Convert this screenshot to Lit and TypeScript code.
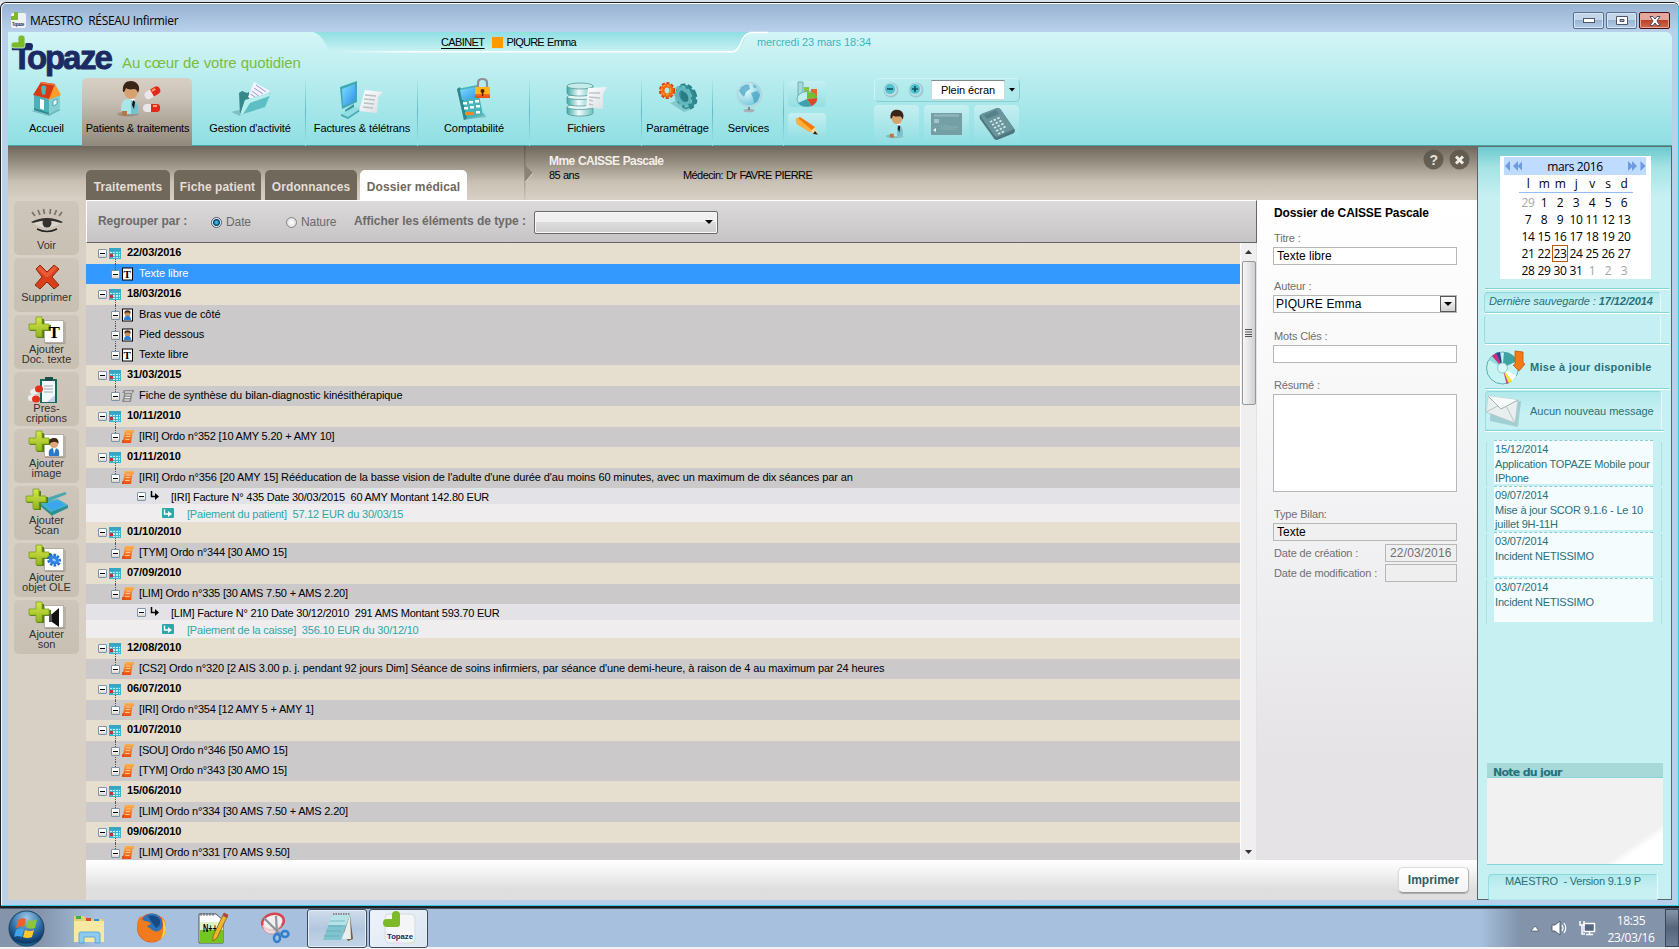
import { LitElement, html, svg, css, TemplateResult } from "lit";
import { customElement, property } from "lit/decorators.js";
import { classMap } from "lit/directives/class-map.js";

type Kind = "date" | "doc" | "bill" | "pay";
interface Row { kind: Kind; icon?: string; text: string; selected?: boolean; }

const d = (text: string): Row => ({ kind: "date", text });
const o = (icon: string, text: string, selected = false): Row => ({ kind: "doc", icon, text, selected });

const ROWS: Row[] = [
  d("22/03/2016"), o("text", "Texte libre", true),
  d("18/03/2016"), o("photo", "Bras vue de côté"), o("photo", "Pied dessous"), o("text", "Texte libre"),
  d("31/03/2015"), o("sheet", "Fiche de synthèse du bilan-diagnostic kinésithérapique"),
  d("10/11/2010"), o("ordo", "[IRI] Ordo n°352 [10 AMY 5.20 + AMY 10]"),
  d("01/11/2010"), o("ordo", "[IRI] Ordo n°356 [20 AMY 15] Rééducation de la basse vision de l'adulte d'une durée d'au moins 60 minutes, avec un maximum de dix séances par an"),
  { kind: "bill", text: "[IRI] Facture N° 435 Date 30/03/2015  60 AMY Montant 142.80 EUR" },
  { kind: "pay", text: "[Paiement du patient]  57.12 EUR du 30/03/15" },
  d("01/10/2010"), o("ordo", "[TYM] Ordo n°344 [30 AMO 15]"),
  d("07/09/2010"), o("ordo", "[LIM] Ordo n°335 [30 AMS 7.50 + AMS 2.20]"),
  { kind: "bill", text: "[LIM] Facture N° 210 Date 30/12/2010  291 AMS Montant 593.70 EUR" },
  { kind: "pay", text: "[Paiement de la caisse]  356.10 EUR du 30/12/10" },
  d("12/08/2010"), o("ordo", "[CS2] Ordo n°320 [2 AIS 3.00 p. j. pendant 92 jours Dim] Séance de soins infirmiers, par séance d'une demi-heure, à raison de 4 au maximum par 24 heures"),
  d("06/07/2010"), o("ordo", "[IRI] Ordo n°354 [12 AMY 5 + AMY 1]"),
  d("01/07/2010"), o("ordo", "[SOU] Ordo n°346 [50 AMO 15]"), o("ordo", "[TYM] Ordo n°343 [30 AMO 15]"),
  d("15/06/2010"), o("ordo", "[LIM] Ordo n°334 [30 AMS 7.50 + AMS 2.20]"),
  d("09/06/2010"), o("ordo", "[LIM] Ordo n°331 [70 AMS 9.50]"),
];

const defs = svg`<defs>
  <linearGradient id="tealx" x1="0" y1="0" x2="1" y2="0"><stop offset="0" stop-color="#3fa9a8"/><stop offset=".45" stop-color="#f2fbfb"/><stop offset="1" stop-color="#6cc0bf"/></linearGradient>
  <linearGradient id="scr" x1="0" y1="0" x2="1" y2="1"><stop offset="0" stop-color="#7fe0ff"/><stop offset="1" stop-color="#2f8ee8"/></linearGradient>
  <linearGradient id="ora" x1="0" y1="0" x2="0" y2="1"><stop offset="0" stop-color="#ffb24a"/><stop offset="1" stop-color="#ee4b0d"/></linearGradient>
  <linearGradient id="pap" x1="0" y1="0" x2="1" y2="1"><stop offset="0" stop-color="#ffffff"/><stop offset="1" stop-color="#d8dde2"/></linearGradient>
  <radialGradient id="orb" cx=".5" cy=".2" r=".9"><stop offset="0" stop-color="#9ccbe8"/><stop offset=".5" stop-color="#2f6ea8"/><stop offset=".8" stop-color="#0e3a66"/><stop offset="1" stop-color="#35c3e8"/></radialGradient>
  <radialGradient id="glo" cx=".35" cy=".3" r=".8"><stop offset="0" stop-color="#f0ffff"/><stop offset="1" stop-color="#6fc4da"/></radialGradient>
  <linearGradient id="grn" x1="0" y1="0" x2="0" y2="1"><stop offset="0" stop-color="#d6e84a"/><stop offset="1" stop-color="#93b51e"/></linearGradient>
</defs>`;

const pic = (w: number, h: number, body: TemplateResult, cls = "") =>
  html`<svg class=${cls} width=${w} height=${h} viewBox="0 0 ${w} ${h}">${defs}${body}</svg>`;

const person = svg`
  <ellipse cx="12" cy="34" rx="11" ry="2.500" fill="#333" opacity=".22"/>
  <path d="M7 34c-3-1-3-13 3-15l7 0c6 2 6 14 4 15z" fill="#a9e6ea"/><path d="M15 20l4 1c4 3 4 11 2 13h-6z" fill="#74c2cb"/>
  <path d="M6 31h5v4c-2 2-5 1-5-1z" fill="#b9763f"/>
  <path d="M14 18l5 1-2 3z" fill="#fff"/><path d="M17 20l2 2-1 7-2-4z" fill="#111"/>
  <ellipse cx="15" cy="11" rx="7" ry="8" fill="#d8a170"/><path d="M7 12C6 4 10 1 15 1s9 4 8 9l-1 3c-1-3-2-4-4-4-4 1-7 0-8-1-1 2-1 4-3 4z" fill="#3a2415"/>`;

const NAV: { label: string; icon: TemplateResult; active?: boolean }[] = [
  { label: "Accueil", icon: svg`<path d="M4 30l18 5 12-6-6-3z" fill="#1d6a70" opacity=".35"/><path d="M7 14l15 4v15L7 28z" fill="#4cb0b6"/><path d="M22 18l11-6v15l-11 6z" fill="#83d0d3"/><path d="M7 27l15 5v1.500L7 29z" fill="#2b868d"/>
    <path d="M28 3l6 11-13 5z" fill="#ff9a2b"/><path d="M14 1l14 2-6 15-16-4z" fill="#d23c10"/><path d="M14 1l14 2-.7 1.500L13 2.500z" fill="#ef7040"/><path d="M14 7q0-3 3-2.500 3 .5 2 3.500l-1 6-3-1z" fill="#4fb6bb"/><path d="M13 18l4 1v10l-4-1.500z" fill="#fff"/><path d="M26 20l4-2v5l-4 2z" fill="#e8fbfb" stroke="#3c8c92" stroke-width=".7"/>` },
  { label: "Patients & traitements", active: true, icon: svg`<g transform="translate(-2 -1)">${person}</g>
    <g transform="rotate(-30 34 12)"><rect x="26" y="8" width="17" height="8" rx="4" fill="#ece6e8"/><path d="M34 8h5a4 4 0 010 8h-5z" fill="#e3281a"/><path d="M35 10h4" stroke="#ff9d6d" stroke-width="2"/></g>
    <rect x="25" y="23" width="17" height="8" rx="4" fill="#ece6e8"/><path d="M33 23h6q3 0 3 3v2q0 3-3 3h-6z" fill="#e3281a"/><path d="M35 25h4" stroke="#ff9d6d" stroke-width="2"/>` },
  { label: "Gestion d'activité", icon: svg`<g transform="translate(1 -1)"><path d="M0 32l12-3-3 7z" fill="#2b6f74" opacity=".3"/><path d="M8 13l3-2 5 2 2-1v18l-9 5z" fill="#36888d"/><path d="M23 2l16 9-14 10-8-4z" fill="#f4f4ff"/><path d="M25 5l10 7M23 8l9 6M21 11l8 6M19.500 14l6 4" stroke="#9b97d8" stroke-width="1"/>
    <path d="M14 20l26-7-6 14-25 8z" fill="#5dbfc3"/><path d="M14 20l26-7-1.500 3L19 23 12 34l-3 1z" fill="#b9eeee"/></g>` },
  { label: "Factures & télétrans", icon: svg`<path d="M-2 6l17-6v21L0 28z" fill="#3fa9b3"/><path d="M0 8l13-5v17L1 25z" fill="url(#scr)"/><path d="M3 29l9-6v5l-8 6z" fill="#3c979d"/><path d="M-1 33l13-7 7 2-13 8z" fill="#8fdde0"/><path d="M-1 33l7 3 12-8v2L6 38l-7-3z" fill="#46aab0"/>
    <path d="M23 9l18 2-5 5-1 16-18-2z" fill="url(#pap)"/><path d="M23 14l11 1M22 18l11 1M22 22l10 1M21 26l10 1" stroke="#b9c1c4" stroke-width="1.3"/>` },
  { label: "Comptabilité", icon: svg`<path d="M8 39l24-3-2-4z" fill="#2b6f74" opacity=".35"/><path d="M3 8l20-4 6 30-19 5z" fill="#4ab4ba"/><path d="M3 8l3-2 7 31-3 2z" fill="#2d888e"/><path d="M6 9l17-3 2 10-17 3z" fill="url(#scr)"/>
    <g fill="#f2fdfd"><rect x="9" y="21" width="4" height="2.500"/><rect x="15" y="20" width="4" height="2.500"/><rect x="21" y="19" width="4" height="2.500"/><rect x="10" y="26" width="4" height="2.500"/><rect x="16" y="25" width="4" height="2.500"/><rect x="22" y="24" width="4" height="2.500"/><rect x="22" y="30" width="4" height="2.500"/></g><rect x="11" y="31" width="9" height="3" fill="#f08a1f"/>
    <path d="M24 7V2q0-4 4.500-4T33 2v5" fill="none" stroke="#8d9196" stroke-width="2.200"/><path d="M21 6h15v11H21z" fill="url(#ora)"/><path d="M21 6h15v7H21z" fill="#ffb516"/><circle cx="28.500" cy="10" r="2" fill="#5a1c08"/><path d="M27.800 10h1.500v5h-1.500z" fill="#5a1c08"/>` },
  { label: "Fichiers", icon: svg`<g stroke="#4c8f8f" stroke-width=".7"><path d="M1 26v6c0 4 26 4 26 0v-6z" fill="url(#tealx)"/><ellipse cx="14" cy="26" rx="13" ry="2.500" fill="#e2f7f6"/><path d="M1 16v6c0 4 26 4 26 0v-6z" fill="url(#tealx)"/><ellipse cx="14" cy="16" rx="13" ry="2.500" fill="#e2f7f6"/><path d="M1 5v7c0 4 26 4 26 0V5z" fill="url(#tealx)"/><ellipse cx="14" cy="5" rx="13" ry="3" fill="#c4ecea"/></g>
    <path d="M22 7l19-1-4 7v15l-17-2z" fill="url(#pap)"/><path d="M23 12h11M23 16l11 1M23 19l4 1M23 23l4 1" stroke="#bcc3c7" stroke-width="1.400"/>` },
  { label: "Paramétrage", icon: svg`<path d="M12 22l14 9 6-2-12-10z" fill="#1d6a70" opacity=".25"/>
    <g transform="rotate(-25 27 15)"><ellipse cx="28" cy="16" rx="9" ry="12" fill="none" stroke="#2c7f86" stroke-width="3" stroke-dasharray="4.500 2.500"/><ellipse cx="27.500" cy="16" rx="6.300" ry="9" fill="none" stroke="#2f8a91" stroke-width="6.500"/><ellipse cx="25" cy="14.500" rx="7.500" ry="10.500" fill="none" stroke="#6fc1c6" stroke-width="2.500" stroke-dasharray="4 2.500"/><ellipse cx="25.500" cy="14.500" rx="5.500" ry="8" fill="none" stroke="#62b7bc" stroke-width="3.500"/><ellipse cx="26.500" cy="15.500" rx="3.200" ry="5.500" fill="#2a7c84"/></g>
    <ellipse cx="9" cy="9.500" rx="6.800" ry="7.200" fill="none" stroke="#dd3d0a" stroke-width="2.500" stroke-dasharray="3 1.600"/><ellipse cx="9" cy="9.500" rx="4.500" ry="5" fill="none" stroke="#f2640f" stroke-width="4.200"/><ellipse cx="8.200" cy="9" rx="4.500" ry="5" fill="none" stroke="#ffa32a" stroke-width="1.200" stroke-dasharray="3 1.500"/>` },
  { label: "Services", icon: svg`<ellipse cx="20" cy="29.500" rx="5.500" ry="1.800" fill="#a8b0b3"/><path d="M19 25h2v4h-2z" fill="#7c8689"/><circle cx="20.500" cy="13.500" r="12" fill="none" stroke="#b3d4db" stroke-width="1.500"/><circle cx="20" cy="13" r="11.200" fill="url(#glo)"/><path d="M12 6q5-4 8-2l1 4-4 3-2 5-3-3-2-3zM22 12l6-2 3 4-3 7-3 1-1-5zM24 3l4 3-3 1z" fill="#3e9ec2" opacity=".7"/>` },
];

const plus = svg`<path d="M9 2h7v6h7v6h-7v7H9v-7H2V8h7z" fill="#4f7d1b" transform="translate(1 1)"/><path d="M9 1h6v7h7v6h-7v7H9v-7H2V8h7z" fill="url(#grn)" stroke="#7aa01d" stroke-width=".8"/>`;
const sheetBg = svg`<rect x="17.500" y="4.500" width="19" height="22" fill="#fff" stroke="#b6aea4"/><path d="M18 27.500h20V6" fill="none" stroke="#a39b91"/>`;
const man = svg`<path d="M22 26c-1-6 1-8 5-8s6 2 5 8z" fill="#2b79c9"/><path d="M26 18l1 6 2-6z" fill="#fff"/><circle cx="27" cy="14" r="4" fill="#dda878"/><path d="M22.500 14c-1-5 2-6 4.500-6s5 1 4.500 6c-2-3-6-3-9 0z" fill="#3d2614"/>`;
const TOOLS = [
  { cls: "eye", lines: ["Voir"], icon: svg`<path d="M6 13q14-8 28 0-14 9-28 0z" fill="#dcd6ce"/><path d="M4 12q16-8 32 0l-2 1q-14-5-28 0z" fill="#33302e"/><circle cx="20" cy="13" r="4.500" fill="#33302e"/><path d="M10 19q10 5 20 0" fill="none" stroke="#222" stroke-width="1.500"/><path d="M8 6L5 2M13 5l-2-5M17.500 4l-1-5M23 4l.5-5M27.500 5l2-5M32 6l3-4" stroke="#77726c" stroke-width="1.700"/>` },
  { cls: "del", lines: ["Supprimer"], icon: svg`<path d="M9 6l4-4 7 7 7-7 5 4-7 8 7 8-5 4-7-7-7 7-5-4 7-8z" fill="#d8401c" stroke="#8e2a12" stroke-width="1"/><path d="M10 6l3-3 7 7 7-7 3 2-9 9-2 0z" fill="#ea5a34"/>` },
  { cls: "", lines: ["Ajouter", "Doc. texte"], icon: svg`${sheetBg}${plus}<text x="21.500" y="22" font-family="Liberation Serif" font-weight="700" font-size="17">T</text>` },
  { cls: "pre", lines: ["Pres-", "criptions"], icon: svg`<path d="M13 4h17v24H13z" fill="#17695c"/><rect x="15" y="6" width="13" height="21" fill="#f3f8fb"/><path d="M18 2h8v4h-8z" fill="#1d4f4a"/><path d="M17 11h9M17 14h9M17 17h9" stroke="#96a8b5"/><path d="M20 27l8-7v7z" fill="#c8cfe8"/><rect x="3" y="13" width="12" height="6" rx="3" fill="#eee" transform="rotate(-20 9 16)"/><ellipse cx="12" cy="14" rx="4" ry="3.500" fill="#e6301b"/><rect x="1" y="20" width="12" height="6" rx="3" fill="#eee"/><ellipse cx="9" cy="24" rx="4" ry="3.500" fill="#e6301b"/>` },
  { cls: "", lines: ["Ajouter", "image"], icon: svg`${sheetBg}${plus}${man}` },
  { cls: "", lines: ["Ajouter", "Scan"], icon: svg`<path d="M14 13l24-8 2 2-22 9z" fill="#4ba6ae"/><path d="M13 16l18-4 10 6-17 8z" fill="#43b2cf"/><path d="M19 17l12-3 6 4-12 5z" fill="#3ba5f2"/><path d="M13 16l11 9v3L13 19zM24 25l17-7v3l-17 8z" fill="#2e8f99"/><g transform="translate(-3 1)">${plus}</g>` },
  { cls: "", lines: ["Ajouter", "objet OLE"], icon: svg`${sheetBg}${plus}<g transform="rotate(30 27 16)"><ellipse cx="27" cy="16" rx="6" ry="5" fill="none" stroke="#1f6fd0" stroke-width="2.500" stroke-dasharray="2.500 1.200"/><ellipse cx="27" cy="16" rx="3.500" ry="2.800" fill="#9fd2fb" stroke="#2d86e6" stroke-width="3.200"/></g>` },
  { cls: "", lines: ["Ajouter", "son"], icon: svg`${sheetBg}${plus}<path d="M22 13h3v8h-3z" fill="#555"/><path d="M25 13l7-6v19l-7-5z" fill="#111"/>` },
];

const rowIcon = (k: string) => ({
  text: svg`<rect x=".5" y="1" width="10" height="12" fill="#fff" stroke="#000"/><text x="1.600" y="11" font-family="Liberation Serif" font-weight="700" font-size="11" fill="#000">T</text>`,
  photo: svg`<rect x=".5" y="1" width="10" height="12" fill="#fff" stroke="#000"/><path d="M2 12c0-4 2-4 3.500-4S9 8 9 12z" fill="#2f7fd6"/><rect x="3" y="3" width="5" height="5" fill="#c98f5c"/><path d="M2.500 6V3.500Q5.500 1 8.500 3.500V6L7 4.500H4z" fill="#4a2c14"/>`,
  sheet: svg`<path d="M2 1h10.500l-1 2.500H10.500L9 13H0l.6-3H1L2 4H0z" fill="#8f8f8f"/><path d="M3 3h7M3.500 6h5M3 8.500h5M2.500 11h5" stroke="#f5f5f5" stroke-width="1.200"/>`,
  ordo: svg`<path d="M3 0h9.500l-1 3h-1L9 13H0l.5-3H1.200z" fill="url(#ora)"/><path d="M4.200 4h4.500M3.700 6.500h4.500M3.200 9.500h4.500" stroke="#ffc58a" stroke-width="1"/><path d="M0 13l.5-3H2.200l-.5 3z" fill="#d94d14"/>`,
}[k]!);

@customElement("history-row")
export class HistoryRow extends LitElement {
  @property({ attribute: false }) row!: Row;
  @property({ type: Boolean }) last = false;
  static styles = css`
    :host { display: block; flex: none; }
    .r { display: flex; box-sizing: border-box; position: relative; white-space: pre; font: 11px "Liberation Sans", Arial, sans-serif; color: #000; }
    .date { height: 21px; background: #e6dfcf; padding-left: 12px; font-weight: 700; letter-spacing: -0.07px; line-height: 19px; }
    .doc { height: 20px; background: #cbc9ca; padding-left: 25px; line-height: 19px; letter-spacing: -0.07px; }
    .ordo { letter-spacing: -0.18px; }
    .long { letter-spacing: -0.115px; }
    .sel { background: #3399ff; color: #fff; }
    .bill { height: 16px; background: #e3e2e6; padding-left: 51px; line-height: 18px; letter-spacing: -0.22px; }
    .pay { height: 18px; background: #efedee; padding-left: 76px; line-height: 20px; color: #2ba8a8; letter-spacing: -0.2px; }
    .box { box-sizing: border-box; width: 9px; height: 9px; border: 1px solid #7d94ab; border-radius: 1px; background: linear-gradient(#fff 40%, #d8d3cb); margin-top: 6px; display: grid; place-items: center; flex: none; z-index: 1; }
    .box i { width: 5px; height: 1px; background: #000; }
    .bill .box { margin-top: 4px; }
    svg { flex: none; }
    .cal { margin: 5px 6px 0 2px; } .ic { margin: 3px 5px 0 2px; }
    .arr { margin: 3px 12px 0 4px; } .pi { margin: 4px 13px 0 0; }
    .date::after, .link::after { content: ""; position: absolute; left: 29px; top: 16px; height: 5px; border-left: 1px dotted #555; }
    .doc::before { content: ""; position: absolute; left: 29px; top: 0; height: 6px; border-left: 1px dotted #555; }
  `;
  render() {
    const r = this.row;
    const box = html`<span class="box"><i></i></span>`;
    if (r.kind === "date") return html`<div class="r date">${box}${pic(12, 11, svg`<rect width="12" height="11" fill="#3db4cf"/><path d="M0 0h12v3H0z" fill="#36a6c4"/><path d="M1 4h2v1H1zM4 4h2v1H4zM7 4h2v1H7zM10 4h1v1h-1zM4 6h2v2H4zM7 6h2v2H7zM10 6h1v2h-1zM4 9h2v1H4zM7 9h2v1H7zM10 9h1v1h-1z" fill="#c4ecf3"/><path d="M1 6h3v3H1z" fill="#c5312d"/>`, "cal")}<span>${r.text}</span></div>`;
    if (r.kind === "doc") return html`<div class=${classMap({ r: true, doc: true, ordo: r.icon === "ordo", long: r.text.length > 100, sel: !!r.selected, link: !this.last })}>${box}${pic(12, 14, rowIcon(r.icon!), "ic")}<span>${r.text}</span></div>`;
    if (r.kind === "bill") return html`<div class="r bill">${box}${pic(9, 10, svg`<path d="M1.500 0v5.500H5" fill="none" stroke="#000" stroke-width="1.500"/><path d="M5 2l4 3.500L5 9z" fill="#000"/>`, "arr")}<span>${r.text}</span></div>`;
    return html`<div class="r pay">${pic(12, 10, svg`<rect width="12" height="10" rx="1" fill="#2ba8a8"/><path d="M2.500 1.500v4.500H7" fill="none" stroke="#fff" stroke-width="1.400"/><path d="M6 3l4 3-4 3z" fill="#fff"/>`, "pi")}<span>${r.text}</span></div>`;
  }
}

@customElement("month-calendar")
export class MonthCalendar extends LitElement {
  static styles = css`
    :host { display: flex; flex-direction: column; width: 151px; height: 123px; background: #fff; font: 12px "Open Sans", "Noto Sans", sans-serif; color: #000; box-sizing: border-box; padding: 1px 5px 0 4px; letter-spacing: -0.4px; flex: none; }
    .head { display: flex; align-items: center; justify-content: space-between; height: 19px; background: #bfdbff; }
    .days, .grid { display: grid; grid-template-columns: repeat(7, 16px); margin-left: 16px; text-align: center; }
    .days { height: 18px; line-height: 18px; border-bottom: 1px solid #94bdf2; width: 114px; margin-left: 15px; padding-left: 1px; box-sizing: border-box; }
    .grid { grid-auto-rows: 17px; line-height: 17px; margin-top: 1px; }
    .off { color: #a6a6a6; }
    .now { outline: 1px solid #c0560f; outline-offset: -1px; }
  `;
  render() {
    const days = [29, ...Array.from({ length: 31 }, (_, i) => i + 1), 1, 2, 3];
    return html`<div class="head">${pic(18, 10, svg`<path d="M6 0v10L1 5zM14 0v10L9 5zM18.500 0v10l-5-5z" fill="#6d9bdd"/>`)}<span>mars 2016</span>${pic(18, 10, svg`<path d="M0 0v10l5-5zM4 0v10l5-5zM12.500 0v10l5-5z" fill="#6d9bdd"/>`)}</div>
      <div class="days">${["l", "m", "m", "j", "v", "s", "d"].map((x) => html`<span>${x}</span>`)}</div>
      <div class="grid">${days.map((n, i) => html`<span class=${classMap({ off: i < 1 || i > 31, now: i === 23 })}>${n}</span>`)}</div>`;
  }
}

@customElement("app-root")
export class AppRoot extends LitElement {
  static styles = css`
    :host { display: flex; flex-direction: column; width: 1679px; height: 949px; overflow: hidden; font: 11px "Liberation Sans", Arial, sans-serif; color: #000; background: #f3f3f3; }
    * { box-sizing: border-box; }
    svg { display: block; overflow: visible; flex: none; }
    .edge { height: 2px; background: #d7e1ec; flex: none; }
    .window { height: 906px; flex: none; display: flex; flex-direction: column; background: #b9d0ea; border: solid #1c1f22; border-width: 1px 0 2px 1px; border-radius: 6px 6px 0 0; box-shadow: inset -1px -1px 0 #32cbe8, inset 1px 1px 0 #f4f8fc; }
    .title { height: 29px; margin: 0 1px 0 1px; background: linear-gradient(#fff 0 1px, #98b3d2 1px, #b9d1eb); display: flex; align-items: center; padding: 4px 7px 0 8px; font: 12px "Open Sans", sans-serif; letter-spacing: -0.33px; white-space: pre; border-radius: 6px 6px 0 0; gap: 4px; }
    .title .cap { flex: 1; padding-top: 2px; }
    .wb { width: 31px; height: 17px; margin: 2px 0 0 -2px; border: 1px solid #56708f; border-radius: 2px; background: linear-gradient(#c3d5e9 0 48%, #9ab5d3 50%, #b4cce6); box-shadow: inset 0 0 0 1px #d8e5f2; display: grid; place-items: center; }
    .wbs { display: flex; gap: 4px; margin-right: 1px; }
    .wb.x { border-color: #4a1218; background: linear-gradient(#e3a79c 0 45%, #bc4128 50%, #cd6c50); box-shadow: inset 0 0 0 1px #e6a79b; }
    .client { width: 1664px; height: 868px; margin-left: 7px; display: flex; flex-direction: column; }

    .header { height: 114px; flex: none; border-bottom: 1px solid #47a3a5; background: linear-gradient(#d3f5f7, #bdeef0 35%, #8fdfe3); display: flex; flex-direction: column; border-radius: 0 6px 0 0; }
    .top { height: 46px; display: flex; align-items: flex-start; }
    .brand { width: 300px; display: flex; height: 46px; flex: none; }
    .brand .slogan { font-size: 15px; color: #7dbb3c; padding: 22px 0 0 5px; white-space: nowrap; letter-spacing: -0.08px; }
    .strip { display: grid; width: 450px; height: 46px; align-content: start; flex: none; }
    .strip > * { grid-area: 1 / 1; }
    .session { display: flex; align-items: center; height: 20px; padding-left: 133px; gap: 8px; letter-spacing: -0.6px; z-index: 1; }
    .session u { text-underline-offset: 2px; }
    .session b { width: 11px; height: 11px; background: #ff9900; }
    .session span { margin-left: -5px; letter-spacing: -0.8px; word-spacing: 1px; }
    .clock { color: #3cb6bd; height: 21px; line-height: 21px; margin-left: -1px; letter-spacing: -0.1px; }
    .nav { display: grid; grid-template-columns: 74px 112px 112px 112px 112px 112px 71px 71px 95px 150px; height: 67px; }
    .item { display: flex; flex-direction: column; align-items: center; padding: 3px 0 0 1px; position: relative; white-space: nowrap; letter-spacing: -0.1px; border-right: 1px solid; border-image: linear-gradient(#b9eaec, #62bdc2 50%, #9fe2e5) 1; }
    .item:first-child { border-color: transparent; border-image: none; padding-left: 4px; }
    .item span { line-height: 17px; }
    .item.on { background: linear-gradient(#d9d0c5, #cbc2b7 30%, #91897b); border: 0; border-radius: 5px 5px 0 0; width: 110px; height: 68px; letter-spacing: -0.18px; }
    .mini { display: flex; flex-direction: column; gap: 6px; padding: 3px 0 0 4px; }
    .mini div, .sq { background: linear-gradient(#c6eff1, #93dfe3); border-radius: 4px; display: grid; place-items: center; }
    .mini div { width: 38px; height: 26px; }
    .ctl { display: flex; flex-direction: column; margin-left: -5px; }
    .zoomer { display: flex; align-items: center; width: 146px; height: 24px; border: 1px solid; border-color: #d3f2f3 #8accd0 #8accd0 #d3f2f3; border-radius: 5px; padding-left: 8px; }
    .zoomer .rd { margin-right: 9px; }
    .field { width: 74px; height: 20px; margin-left: -2px; background: #fff; border: 1px solid #c9dadb; border-top-color: #7d8d8e; display: grid; place-items: center; letter-spacing: -0.1px; }
    .zoomer .tri { margin-left: 4px; }
    .sqs { display: flex; gap: 5px; margin-top: 3px; }
    .sq { width: 45px; height: 37px; }

    .work { flex: 1; display: flex; min-height: 0; }
    .main { width: 1469px; flex: none; display: flex; flex-direction: column; background: linear-gradient(#6f675b, #90887b 14px, #cac1b5 36px, #d9d0c5 54px); }
    .bar { height: 54px; display: flex; flex: none; padding-left: 72px; }
    .tabs { display: flex; align-items: flex-end; width: 445px; gap: 4px; padding-left: 6px; }
    .tab { height: 30px; line-height: 34px; text-align: center; background: #70685b; color: #e4ded6; font-weight: 700; font-size: 12px; border-radius: 5px 5px 0 0; white-space: nowrap; flex: none; letter-spacing: 0.1px; }
    .tab.on { background: #fff; color: #70685b; margin-left: -1px; }
    .t1 { width: 84px; } .t2 { width: 87px; } .t3 { width: 92px; } .t4 { width: 107px; }
    .patient { flex: 1; display: grid; grid-template-columns: 134px 1fr; grid-template-rows: 14px 14px; padding: 8px 0 0 14px; line-height: 14px; letter-spacing: -0.58px; word-spacing: 0.5px; }
    .patient b { grid-column: 1 / 3; color: #f3efea; font-size: 12px; letter-spacing: -0.55px; }
    .help { display: flex; gap: 5px; padding: 3px 7px 0 0; }
    .cols { display: flex; flex: 1; min-height: 0; }
    .tools { width: 78px; display: flex; flex-direction: column; gap: 3px; padding: 1px 0 0 6px; flex: none; }
    .tool { width: 65px; height: 54px; flex: none; border-radius: 5px; background: linear-gradient(#cfc6bb, #c9c0b4); display: flex; flex-direction: column; align-items: center; line-height: 10px; color: #34302c; padding-top: 1px; }
    .tool.eye { padding-top: 9px; line-height: 16px; } .tool.eye svg { margin-bottom: -1px; }
    .tool.del { padding-top: 5px; line-height: 13px; }
    .tool.pre { padding-top: 3px; }
    .content { flex: 1; display: flex; flex-direction: column; min-width: 0; }
    .panes { display: flex; height: 660px; }
    .left { width: 1171px; display: flex; flex-direction: column; flex: none; }
    .filter { height: 43px; flex: none; border: solid #67656a; border-width: 1px 1px 1px 0; border-top-color: #fff; border-left: 1px solid #fff; background: linear-gradient(#dcdadb, #c6c4c5); display: flex; align-items: center; padding: 0 0 1px 11px; color: #6c6a69; font-size: 12px; white-space: nowrap; }
    .filter b, .filter i, .filter span { flex: none; }
    .filter span { letter-spacing: -0.1px; padding-top: 2px; }
    .f1 { width: 113px; letter-spacing: -0.05px; } .f2 { width: 60px; } .f3 { width: 53px; } .f4 { width: 180px; letter-spacing: -0.05px; }
    .rb { width: 11px; height: 11px; border-radius: 50%; border: 1px solid #85868a; background: radial-gradient(#fff, #d4d4d4); margin: 2px 4px 0 0; }
    .rb.on { border-color: #4a5f75; background: radial-gradient(#35b7e8 0 1px, #0b3b63 3px, #e6eef4 4px); }
    .combo { width: 184px; height: 23px; border: 1px solid #69686c; border-radius: 2px; background: linear-gradient(#f0f0f0 48%, #dcdcdc 50%, #cfcfcf); box-shadow: inset 0 0 0 1px #f8f8f8; display: flex; justify-content: flex-end; align-items: center; padding-right: 4px; margin-top: 2px; }
    .listwrap { display: flex; flex: 1; min-height: 0; }
    .list { width: 1154px; overflow: hidden; display: flex; flex-direction: column; flex: none; }
    .sb { width: 17px; background: #efefef; border-left: 1px solid #fff; display: flex; flex-direction: column; align-items: center; padding: 7px 1px 6px; border-right: 1px solid #e3e3e3; }
    .thumb { width: 14px; height: 144px; margin-top: 7px; border: 1px solid #979797; border-radius: 2px; background: linear-gradient(90deg, #f6f6f6, #e4e4e6 50%, #cfcfd2); display: grid; place-items: center; }
    .grow { flex: 1; }
    .form { flex: 1; background: linear-gradient(#fff, #f9f9fa 25%, #f0eff1 55%, #e5e3e6 85%); padding: 6px 20px 0 16px; display: flex; flex-direction: column; color: #707070; min-width: 0; }
    .form h1 { margin: 0 0 0 1px; font-size: 12px; line-height: 14px; color: #000; letter-spacing: -0.1px; white-space: nowrap; }
    label { line-height: 14px; margin-left: 1px; white-space: nowrap; letter-spacing: -0.15px; }
    .l1 { margin-top: 11px; } .l2 { margin-top: 14px; } .l3 { margin-top: 16px; } .l4 { margin-top: 15px; } .l5 { margin-top: 15px; }
    .in { height: 18px; border: 1px solid #b7b7b7; background: #fff; color: #000; font-size: 12px; line-height: 16px; padding-left: 3px; display: flex; justify-content: space-between; }
    .in.ro { background: #f1f0f1; }
    .m2 { margin-top: 2px; }
    .in.area { height: 98px; }
    .in.au { padding-left: 2px; letter-spacing: 0.15px; }
    .drop { width: 16px; height: 16px; border: 1px solid #585858; background: linear-gradient(#fdfdfd, #cfcfcf); display: grid; place-items: center; }
    .line { display: flex; justify-content: space-between; align-items: center; margin-top: 3px; height: 17px; }
    .line .in { width: 72px; color: #707070; background: #f0eff0; }
    .line .dt { padding-left: 4px; letter-spacing: 0.15px; }
    .foot { height: 40px; background: linear-gradient(#fff, #f3f3f3 30%, #dedede 75%, #dfdfdf); display: flex; justify-content: flex-end; padding: 7px 8px 0 0; }
    .print { width: 71px; height: 26px; border-radius: 5px; background: linear-gradient(#fff, #f3f3f3); border: 1px solid #dcdcdc; border-bottom-color: #999; border-right-color: #b5b5b5; box-shadow: 0 1px 1px #aaa; color: #2c5f66; font: bold 12px/24px "Liberation Sans", sans-serif; text-align: center; }

    .side { flex: 1; min-width: 0; border: 1px solid #59646a; border-top-color: #63706f; background: linear-gradient(#6cc9cd, #a5e3e5 20px, #c7f0f3 50px, #c7f0f3); display: flex; flex-direction: column; padding: 9px 2px 0 7px; color: #2a7079; }
    .side month-calendar { margin-left: 15px; }
    .hr { height: 2px; background: linear-gradient(#85d6da 50%, #fff 50%); flex: none; }
    .h1 { margin-top: 9px; }
    .hm { margin-right: 5px; }
    .cell { border: 1px solid; border-color: #8ad8dc #e6fafb transparent #98dde0; border-radius: 4px 4px 0 0; background: linear-gradient(#b2e9ec, #c7f0f3 60%); flex: none; }
    .save { height: 20px; margin: 2px 8px 0 -1px; padding: 0 4px; line-height: 17px; font-style: italic; white-space: nowrap; letter-spacing: -0.1px; }
    .blank { height: 28px; margin: 1px 8px 0 -1px; background: #c5eff2; border-top-color: transparent; }
    .upd { height: 43px; display: flex; align-items: center; font-weight: 700; gap: 5px; padding-left: 1px; white-space: nowrap; letter-spacing: 0.28px; flex: none; }
    .msg { height: 39px; display: flex; align-items: center; gap: 9px; margin-top: 1px; margin-right: 7px; white-space: nowrap; letter-spacing: -0.02px; }
    .news { margin: 8px 7px 0 1px; display: flex; flex-direction: column; flex: none; }
    .n { height: 46px; padding: 0 8px 2px 7px; border-image: linear-gradient(transparent 3px, #a9e1e4 3px) 1; border-style: solid; border-width: 0 1px; }
    .n div { height: 44px; border-top: 1px dashed #86cdd2; background: #f4fcfd; padding: 1px 0 0 1px; line-height: 14px; letter-spacing: -0.18px; }
    .n p { margin: 0; line-height: 14px; } .n p + p { margin-top: 1px; }
    .note { margin: 139px 6px 0 2px; height: 102px; background: linear-gradient(145deg, #f1f1f1 82%, #fff 86%); border-bottom: 1px solid #84d4d9; flex: none; }
    .note b { display: block; height: 15px; background: #a6d9d8; border-bottom: 1px solid #87d4d8; padding-left: 6px; line-height: 19px; font-family: "DejaVu Sans", sans-serif; font-size: 11px; color: #23727c; letter-spacing: -0.72px; overflow: hidden; }
    .ver { margin: 9px 11px 0 3px; height: 26px; text-align: center; white-space: pre; line-height: 13px; letter-spacing: -0.23px; }

    .task { height: 39px; flex: none; border-top: 1px solid #4a586c; background: linear-gradient(90deg, #8494ab 0 40px, #a7c0dd 95px 1480px, #8293aa 1520px); display: flex; align-items: center; font: 12px "Open Sans", sans-serif; color: #fff; }
    .icons { display: flex; align-items: center; gap: 30px; padding-left: 8px; }
    .ab { height: 39px; border: 1px solid #3d4a5c; border-radius: 3px; background: linear-gradient(#cfdcec, #b2c7df 50%, #c3d5e8); box-shadow: inset 0 0 0 1px #e6eff8; display: grid; place-items: center; }
    .ab.a { width: 60px; margin-left: 17px; } .ab.b { width: 59px; margin-left: 2px; background: linear-gradient(135deg, #eef3f9, #dbe6f2); }
    .tray { display: flex; align-items: center; gap: 12px; }
    .hour { text-align: center; line-height: 17px; width: 62px; letter-spacing: -0.4px; margin-left: -8px; padding-top: 2px; }
    .desk { width: 14px; height: 38px; border: 1px solid #38465a; background: linear-gradient(#8694a8, #56657b 50%, #6b7d94); margin-left: 3px; }
  `;

  render() {
    return html`<div class="edge"></div>
      <div class="window">
        <div class="title">
          ${pic(16, 16, svg`<rect x="1" y="1" width="15" height="15" rx="2" fill="#eef1f5"/><path d="M4 0h4v8H1V4h3z" fill="#7db928"/><text x="2" y="13.500" font-size="4.500" font-weight="700" fill="#1b2a63" font-family="Liberation Sans" textLength="12" lengthAdjust="spacingAndGlyphs">Topaze</text>`)}
          <span class="cap">MAESTRO  RÉSEAU Infirmier</span>
          <div class="wbs">
            <span class="wb">${pic(12, 5, svg`<rect x=".5" y=".5" width="11" height="4" fill="#fff" stroke="#4c5666"/>`)}</span>
            <span class="wb">${pic(12, 9, svg`<path d="M.5.500h11v8H.5z M4 3.500h4v2H4z" fill="#fff" fill-rule="evenodd" stroke="#4c5666"/>`)}</span>
            <span class="wb x">${pic(12, 10, svg`<path d="M1 .5h3l2 2.500 2-2.500h3L8 5l3 4.500H8L6 7 4 9.500H1L4 5z" fill="#fff" stroke="#4c4c5a"/>`)}</span>
          </div>
        </div>
        <div class="client">
          ${this.header()}
          <div class="work">${this.main()}${this.side()}</div>
        </div>
      </div>
      ${this.taskbar()}`;
  }

  header() {
    return html`<div class="header">
      <div class="top">
        <div class="brand">
          ${pic(109, 46, svg`<text x="4 19 37 55 72 86.500" y="36.500" font-family="Liberation Sans" font-weight="700" font-size="33" fill="#1b2a63" stroke="#1b2a63" stroke-width=".9">Topaze</text><rect x="16" y="11" width="9" height="6" rx="3" fill="#1b2a63"/><path d="M10 6q0-3 3.500-3T17 6v8q0 2-2 2H6q-3 0-3-3t3-3h4z" fill="#7db928" stroke="#c9f1ef" stroke-width=".8"/>`)}
          <span class="slogan">Au cœur de votre quotidien</span>
        </div>
        <div class="strip">
          <svg width="450" height="21" viewBox="0 0 450 21">
            <defs><linearGradient id="st" x1="0" y1="0" x2="0" y2="1"><stop offset="0" stop-color="#8fdfe3"/><stop offset="1" stop-color="#c8f1f3"/></linearGradient><linearGradient id="wl"><stop offset="0" stop-color="#fff" stop-opacity="0"/><stop offset=".2" stop-color="#fff"/></linearGradient></defs>
            <path d="M5 0h438q-5 2-8 10-3 9-8 9H21Q14 2 5 0z" fill="url(#st)"/><rect x="30" y="19" width="392" height="1.500" fill="url(#wl)"/><path d="M420 19.700h5q5-1 8-9 3-9 10-10.200h17" fill="none" stroke="#fff" stroke-width="1.500"/>
          </svg>
          <div class="session"><u>CABINET</u><b></b><span>PIQURE Emma</span></div>
        </div>
        <span class="clock">mercredi 23 mars 18:34</span>
      </div>
      <div class="nav">
        ${NAV.map((n) => html`<div class=${classMap({ item: true, on: !!n.active })}>${pic(40, 39, n.icon)}<span>${n.label}</span></div>`)}
        <div class="mini">
          <div>${pic(24, 26, svg`<path d="M3 1h5v14H3z" fill="#9fdcdc" stroke="#578f90" stroke-width=".6"/><path d="M9 6h5v9H9z" fill="#8cc24a"/><path d="M16 8h6v10h-6z" fill="#e5682d"/><ellipse cx="12" cy="18" rx="10" ry="7.500" fill="#bfeef0" stroke="#5a9b9c" stroke-width=".7"/><path d="M12 18V11q9 0 10 6z" fill="#6fc22f"/><path d="M12 18l10-1q0 6-6 8z" fill="#d94a2a"/><path d="M12 18l4 7q-9 2-13-3z" fill="#3fa0b0"/>`)}</div>
          <div>${pic(24, 20, svg`<path d="M1 3l4-2 15 10 1 6-6-1L2 8z" fill="#f47a0c"/><path d="M2 8L1 3l2-1 15 13-3 1z" fill="#ffb03a"/><path d="M15 16l5-5 3 7z" fill="#f1d9a8"/><path d="M20 15l3 3.500-5-.5z" fill="#222"/>`)}</div>
        </div>
        <div class="ctl">
          <div class="zoomer">
            ${["M4 7h6", "M4 7h6M7 4v6"].map((p) => pic(16, 16, svg`<circle cx="8" cy="8" r="7.500" fill="#8fb9c0" opacity=".7"/><circle cx="7.500" cy="7.500" r="6.500" fill="#b9dde1"/><circle cx="7" cy="7" r="5" fill="#4fc2cf"/><path d=${p} stroke="#0f5360" stroke-width="1.600"/>`, "rd"))}
            <span class="field">Plein écran</span>${pic(6, 4, svg`<path d="M0 0h6L3 3.500z"/>`, "tri")}
          </div>
          <div class="sqs">
            <div class="sq">${pic(24, 32, svg`<g transform="translate(0 1) scale(.8)">${person}</g>`)}</div>
            <div class="sq">${pic(31, 22, svg`<rect width="31" height="22" fill="#74a0a5"/><path d="M3 2.500h25" stroke="#94b9bd" stroke-width="2"/><path d="M3 6h5v4H3z" fill="#a3c5c8"/><path d="M2 17l3-2v4z" fill="#e2f3f4"/><text x="9" y="17" font-size="7" font-style="italic" fill="#8bb1b5">Vitale</text>`)}</div>
            <div class="sq">${pic(36, 34, svg`<path d="M1 8L18 1q3 0 4 2l14 20q0 3-3 4L18 33q-3 0-4-3L1 12q-1-2 0-4z" fill="#4f7780"/><path d="M2 7L18 1q3 0 4 2l13 19-17 8q-2 0-3-2L2 10z" fill="#6b959c"/><path d="M5 8l12-5 3 4-12 5z" fill="#54818a"/><path d="M11 15l11-5M13 18l11-5M15 21l11-5M17 24l11-5M19 27l7-3" stroke="#c9e6e8" stroke-width="1.800" stroke-dasharray="2.500 1.500"/>`)}</div>
          </div>
        </div>
      </div>
    </div>`;
  }

  main() {
    const round = (g: TemplateResult) => pic(21, 21, svg`<circle cx="10.500" cy="10.500" r="10" fill="#5d564b" opacity=".85"/>${g}`);
    return html`<div class="main">
      <div class="bar">
        <div class="tabs">
          <span class="tab t1">Traitements</span><span class="tab t2">Fiche patient</span><span class="tab t3">Ordonnances</span><span class="tab on t4">Dossier médical</span>
        </div>
        ${pic(10, 54, svg`<defs><linearGradient id="nv" x1="0" y1="0" x2="0" y2="1"><stop offset="0" stop-color="#5c5449"/><stop offset="1" stop-color="#cfc5ba"/></linearGradient></defs><rect x="-1" width="1.500" height="54" fill="url(#nv)"/><path d="M0 19l8 8-8 9z" fill="#8a8276"/><path d="M0 36l8-9" stroke="#d8d0c6"/>`)}
        <div class="patient"><b>Mme CAISSE Pascale</b><span>85 ans</span><span>Médecin: Dr FAVRE PIERRE</span></div>
        <div class="help">${round(svg`<text x="6.500" y="15.500" font-size="14" font-weight="700" fill="#e6e1da">?</text>`)}${round(svg`<path d="M7 7.500l7 7M14 7.500l-7 7" stroke="#f0ece6" stroke-width="3"/>`)}</div>
      </div>
      <div class="cols">
        <div class="tools">${TOOLS.map((t) => html`<div class="tool ${t.cls}">${pic(40, 28, t.icon)}${t.lines.map((l) => html`<span>${l}</span>`)}</div>`)}</div>
        <div class="content">
          <div class="panes">
            <div class="left">
              <div class="filter">
                <b class="f1">Regrouper par :</b><i class="rb on"></i><span class="f2">Date</span><i class="rb"></i><span class="f3">Nature</span><b class="f4">Afficher les éléments de type :</b>
                <div class="combo">${pic(8, 4, svg`<path d="M0 0h8L4 4z"/>`)}</div>
              </div>
              <div class="listwrap">
                <div class="list">${ROWS.map((r, i) => html`<history-row .row=${r} .last=${ROWS[i + 1]?.kind !== "doc"}></history-row>`)}</div>
                <div class="sb">${pic(7, 4, svg`<path d="M0 4h7L3.500 0z" fill="#333"/>`)}<div class="thumb">${pic(7, 8, svg`<path d="M0 .5h7M0 3h7M0 5.500h7M0 7.500h7" stroke="#555"/>`)}</div><span class="grow"></span>${pic(7, 4, svg`<path d="M0 0h7L3.500 4z" fill="#333"/>`)}</div>
              </div>
            </div>
            <div class="form">
              <h1>Dossier de CAISSE Pascale</h1>
              <label class="l1">Titre :</label><div class="in m2">Texte libre</div>
              <label class="l2">Auteur :</label><div class="in au m2"><span>PIQURE Emma</span><i class="drop">${pic(8, 4, svg`<path d="M0 0h8L4 4z"/>`)}</i></div>
              <label class="l3">Mots Clés :</label><div class="in m2"></div>
              <label class="l4">Résumé :</label><div class="in area m2"></div>
              <label class="l5">Type Bilan:</label><div class="in ro m2">Texte</div>
              <div class="line"><label>Date de création :</label><div class="in dt">22/03/2016</div></div>
              <div class="line"><label>Date de modification :</label><div class="in"></div></div>
            </div>
          </div>
          <div class="foot"><div class="print">Imprimer</div></div>
        </div>
      </div>
    </div>`;
  }

  side() {
    const news = [["15/12/2014", "Application TOPAZE Mobile pour IPhone"], ["09/07/2014", "Mise à jour SCOR 9.1.6 - Le 10 juillet 9H-11H"], ["03/07/2014", "Incident NETISSIMO"], ["03/07/2014", "Incident NETISSIMO"]];
    return html`<div class="side">
      <month-calendar></month-calendar>
      <div class="hr h1"></div>
      <div class="cell save">Dernière sauvegarde : <b>17/12/2014</b></div>
      <div class="hr"></div><div class="cell blank"></div><div class="hr"></div>
      <div class="upd">${pic(39, 36, svg`<circle cx="16.500" cy="19" r="16" fill="#c6f4f3" stroke="#5aaeb6"/><path d="M16.500 19L18 3q10 1 13 9z" fill="#3fa3a3"/><path d="M16.500 19L3 11Q8 4 15 3z" fill="#8fdcdc"/><path d="M16.500 19L6 7l4-3z" fill="#d1287f"/><path d="M16.500 19L10 4l4-1z" fill="#2d3f8e"/><path d="M16.500 19l6 15 4-2z" fill="#f2e83a"/><path d="M16.500 19l4 16 2-1z" fill="#e0407a"/><path d="M16.500 19l10 13 4-5z" fill="#fff"/><circle cx="16.500" cy="19" r="5" fill="#d9f7f7" stroke="#8fc9cd"/><path d="M29 2l8 1v11l2 1-6 7-6-6h2z" fill="#f37b16" stroke="#c2530c" stroke-width=".8"/>`)}<span>Mise à jour disponible</span></div>
      <div class="hr"></div>
      <div class="cell msg">${pic(35, 32, svg`<path d="M5 8l30-2-3 26L4 26z" fill="#4b8488" opacity=".3"/><path d="M2 1l30 4-3 23L0 17z" fill="#e9eeee" stroke="#b5c6c8" stroke-width=".7"/><path d="M2 1l13 13 17-9" fill="#f7fafa" stroke="#9fb2b4"/><path d="M0 17l12-6M29 28l-9-17" stroke="#b5c6c8"/>`)}<span>Aucun nouveau message</span></div>
      <div class="hr hm"></div>
      <div class="news">${news.map(([a, b]) => html`<div class="n"><div><p>${a}</p><p>${b}</p></div></div>`)}</div>
      <div class="note"><b>Note du jour</b></div>
      <div class="cell ver">MAESTRO  - Version 9.1.9 P</div>
    </div>`;
  }

  taskbar() {
    return html`<div class="task">
      <div class="icons">
        ${pic(37, 37, svg`<circle cx="18.500" cy="18.500" r="18" fill="#1c4668"/><circle cx="18.500" cy="18.500" r="17" fill="url(#orb)"/><path d="M10 10q4-3 8-1l-2 8q-4-2-8 1z" fill="#f0602a"/><path d="M20 10q4 2 9-1l-2 9q-5 2-9-1z" fill="#8cc63e"/><path d="M8 20q4-3 8-1l-2 8q-4-2-8 0z" fill="#3fa5e8"/><path d="M17 20q5 2 9 0l-2 7q-5 2-9 0z" fill="#fcc62c"/>`)}
        ${pic(32, 30, svg`<g transform="translate(-2 1)"><path d="M1 2h10l2 3h17v23H1z" fill="#e9cf74"/><path d="M3 2h5v3H3z" fill="#35b34a"/><path d="M13 4h5v3h-5z" fill="#d84a2c"/><path d="M21 5h5v3h-5z" fill="#2f8fe0"/><path d="M1 7h30v21H1z" fill="#f7e8a4"/><path d="M6 29V20q0-2 2-2h17q2 0 2 2v9h-5v-6H11v6z" fill="#8ecbf0" stroke="#4d9fd2" stroke-width=".8"/></g>`)}
        ${pic(31, 30, svg`<g transform="translate(-1 0)"><circle cx="15.500" cy="15" r="14.500" fill="#e2571c"/><circle cx="16" cy="11" r="10.500" fill="#2b74b8"/><path d="M12 3q8-2 12 4 1 6-4 8l-3-4z" fill="#184a86"/><path d="M1 13Q1 6 5 3q0 4 4 5 4 0 6 3-3 1-4 3 3 0 5 3 6 4 11-3 2-6-2-11 5 4 5 12-1 13-14 14Q2 28 1 13z" fill="#ef7b1c"/><path d="M26 5q4 5 4 12-1 6-5 9 4-9 1-21z" fill="#fcd446"/></g>`)}
        ${pic(31, 32, svg`<path d="M1 2h17l7 6v23H1z" fill="#fff" stroke="#555"/><path d="M2 14h23v17H2z" fill="#74c520"/><path d="M2 10h23v8H2z" fill="#dff2c4"/><path d="M3 1v3M6 1v3M9 1v3M12 1v3M15 1v3" stroke="#666"/><text x="5" y="20" font-size="10" textLength="14" lengthAdjust="spacingAndGlyphs" font-weight="700" font-family="Liberation Sans">N++</text><path d="M26 1l4 2-11 23-4 3 0-5z" fill="#eeb62a" stroke="#8a5a14" stroke-width=".8"/><path d="M26 1l4 2-1 3-4-2z" fill="#b3424a"/>`)}
        ${pic(31, 31, svg`<ellipse cx="14" cy="9" rx="11" ry="8" fill="#f3eef0" stroke="#d64550" stroke-width="2.500" transform="rotate(-15 14 9)"/><path d="M3 12q2 10 12 9l8-9" fill="#f3eef0" opacity=".8" stroke="#dc8b92"/><path d="M5 5l17 17M17 3l1 18" stroke="#8c949c" stroke-width="2.200"/><ellipse cx="18" cy="25" rx="3" ry="4" fill="none" stroke="#2f7fd0" stroke-width="2.500"/><ellipse cx="26" cy="21" rx="3.500" ry="3" fill="none" stroke="#2f7fd0" stroke-width="2.500"/>`)}
      </div>
      <div class="ab a">${pic(31, 30, svg`<path d="M12 2h16l3 24-5 2z" fill="#77603a"/><path d="M10 2h18l-9 25H1z" fill="#7fc4cf"/><path d="M28 2l1 24h-9z" fill="#e9eef0"/><path d="M10 2h18l-4 10H6z" fill="#b5e3e8"/><path d="M8 8h15M6 13h15M4 18h15M2 23h15" stroke="#5aa3b0" stroke-width=".6"/><path d="M11 1h17" stroke="#888" stroke-width="2" stroke-dasharray="1.500 1"/>`)}</div>
      <div class="ab b">${pic(34, 34, svg`<rect x="3" y="3" width="30" height="29" rx="4" fill="#f3f5f7" stroke="#d4dbe2"/><path d="M10 4q0-4 4-4t4 4v9q0 3-3 3H5q-4 0-4-4t4-4h5z" fill="#7db928"/><text x="5" y="28" font-size="8" font-weight="700" fill="#1b2a63" textLength="26" lengthAdjust="spacingAndGlyphs" font-family="Liberation Sans">Topaze</text>`)}</div>
      <span class="grow"></span>
      <div class="tray">
        ${pic(8, 5, svg`<path d="M0 5h8L4 0z" fill="#fff" stroke="#47566b" stroke-width=".7"/>`)}
        ${pic(16, 16, svg`<path d="M1 5h3l5-4v14l-5-4H1z" fill="#fff" stroke="#3f4d60" stroke-width=".8"/><path d="M11 5q2 3 0 6M13 3q3.500 5 0 10" fill="none" stroke="#fff" stroke-width="1.200"/>`)}
        ${pic(17, 16, svg`<path d="M5 3.500h10.500v8H5z" fill="#56687f" stroke="#fff" stroke-width="1.500"/><path d="M7 14.500h7M10.500 12v2" stroke="#fff" stroke-width="1.500"/><path d="M1 1v4h4V1M3 5v9h3" fill="none" stroke="#fff" stroke-width="1.500"/>`)}
        <div class="hour">18:35<br />23/03/16</div>
      </div>
      <div class="desk"></div>
    </div>`;
  }
}
